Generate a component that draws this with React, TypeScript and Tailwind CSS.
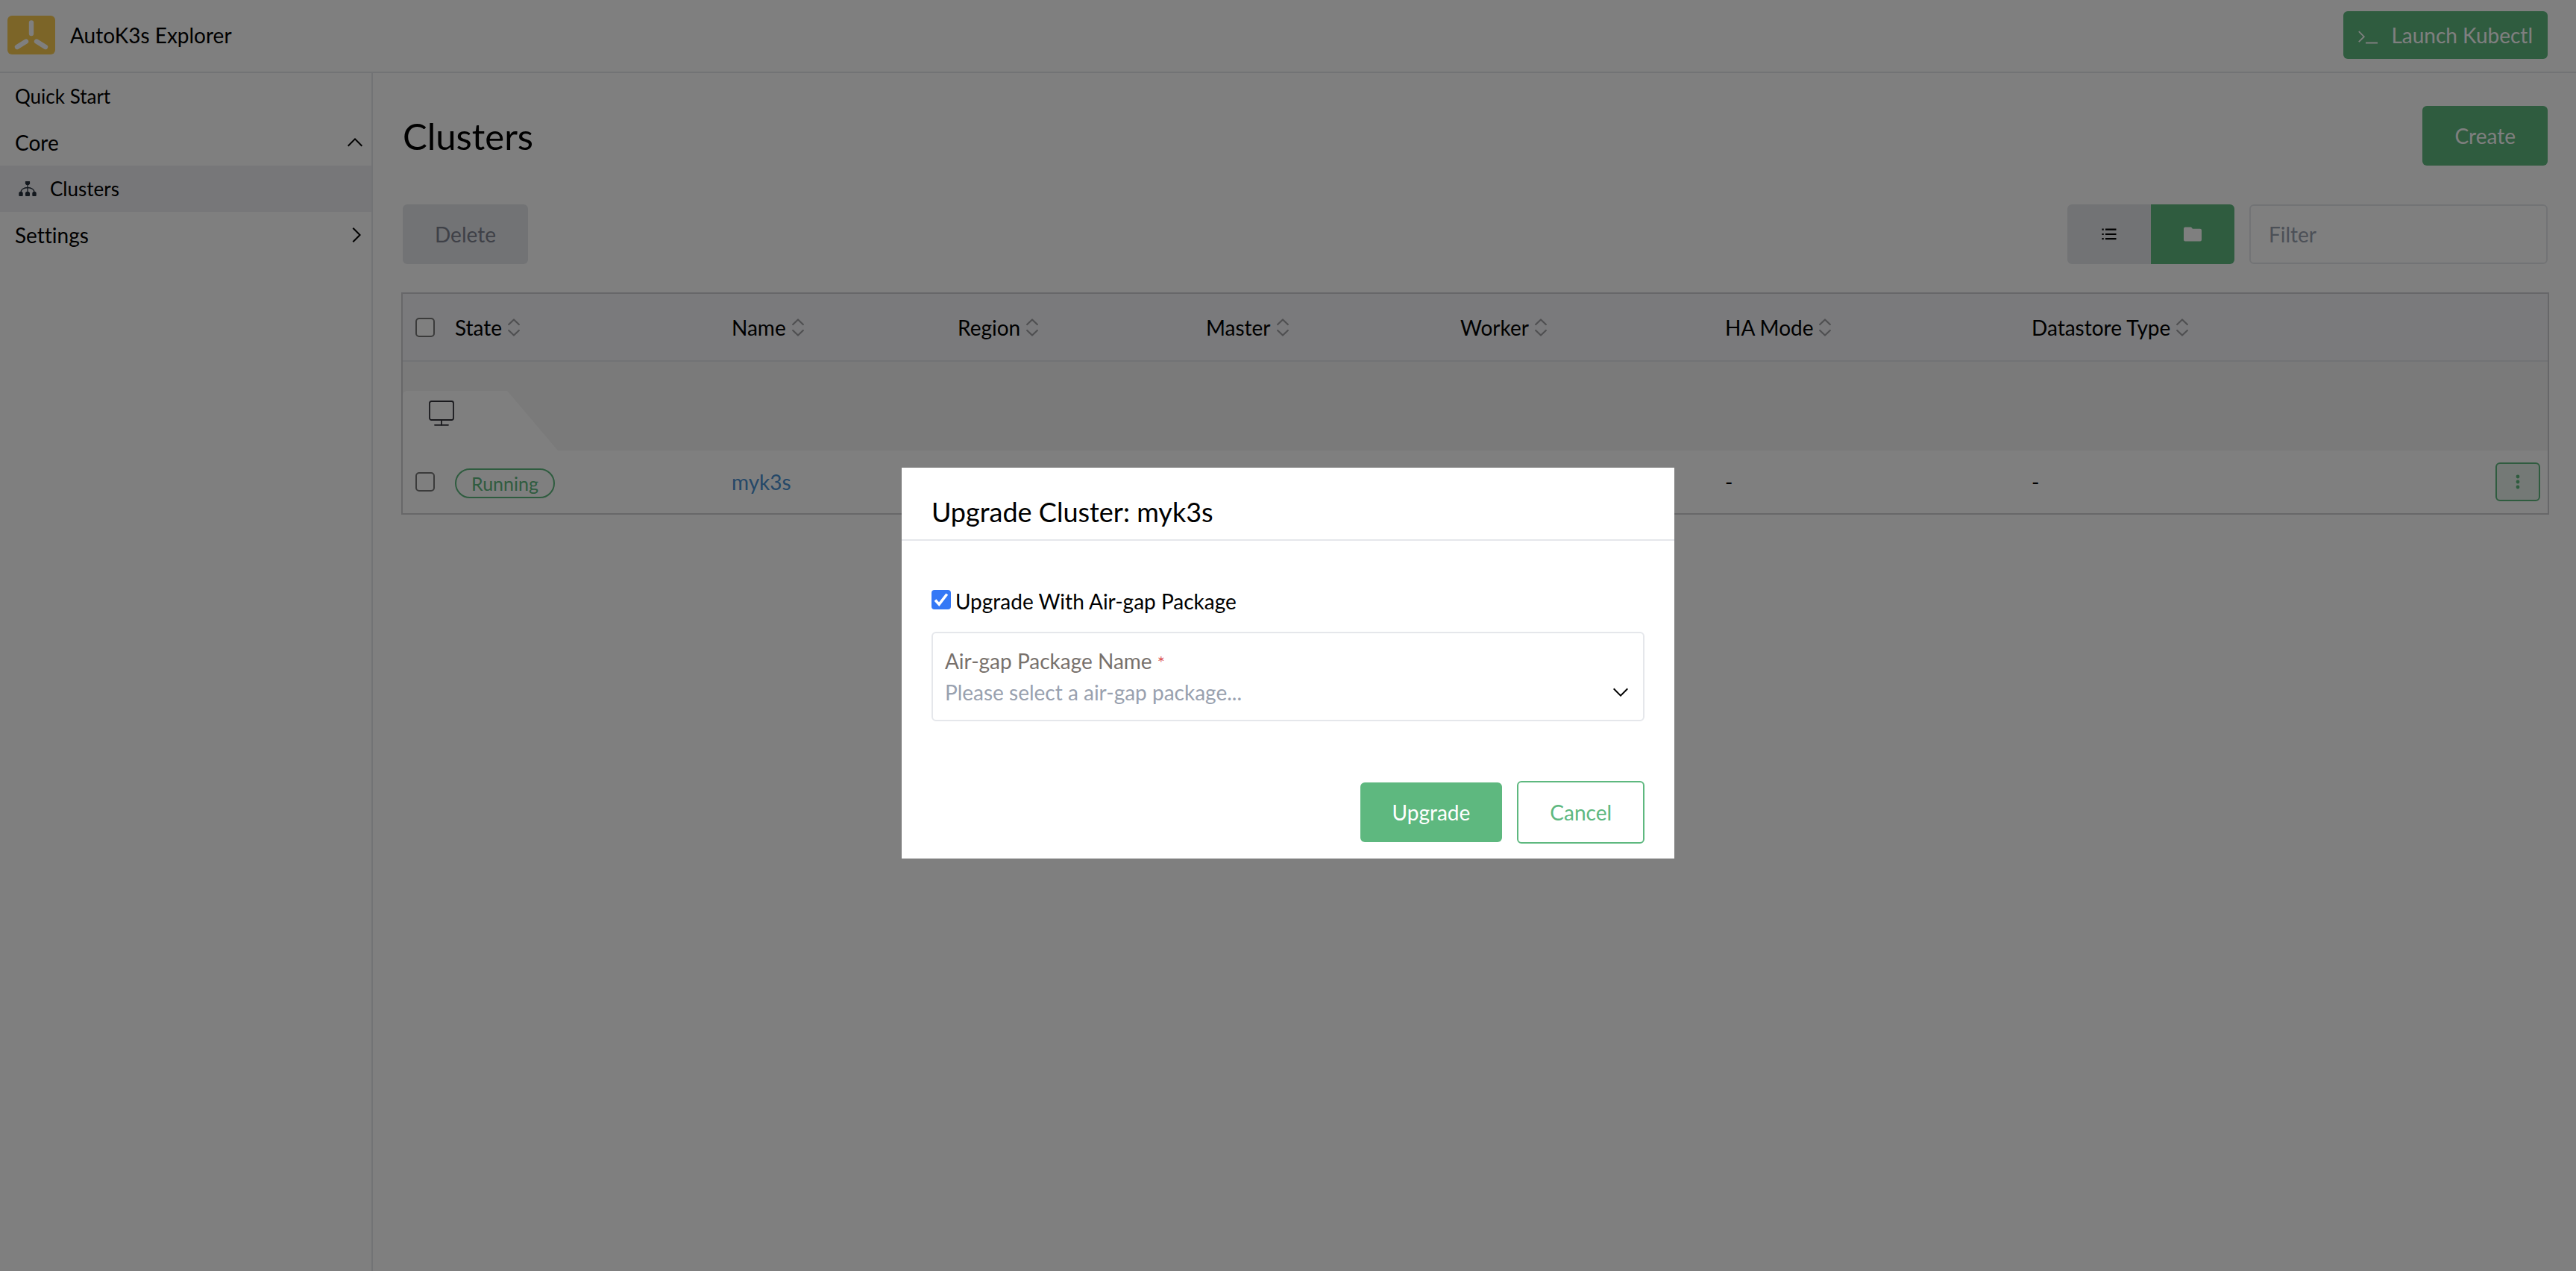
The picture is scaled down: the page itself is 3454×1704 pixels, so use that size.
import React, { useState } from "react";

type IconProps = { className?: string };

function LogoIcon() {
  return (
    <svg viewBox="0 0 64 52" className="h-[52px] w-16 shrink-0" aria-hidden="true">
      <rect width="64" height="52" rx="6" fill="#f9cb50" />
      <g stroke="#fff" strokeWidth="6.4" strokeLinecap="round">
        <path d="M32 9.5V24" />
        <path d="M25 34.5 13 42" />
        <path d="M39 34.5 51 42" />
      </g>
    </svg>
  );
}

function ClusterIcon() {
  return (
    <svg viewBox="0 0 24 20" className="h-5 w-6" aria-hidden="true" fill="#26303c">
      <path d="M9.5 0h5a.6.6 0 0 1 .6.6v2.8L13.6 5h-3.2L8.9 3.4V.6A.6.6 0 0 1 9.5 0Z" />
      <path d="M1.500 14h3l1.200 1.500V19a1 1 0 0 1-1 1H1.300a1 1 0 0 1-1-1v-3.500L1.500 14ZM10.400 14h3.200l1.400 1.500V19a1 1 0 0 1-1 1h-4a1 1 0 0 1-1-1v-3.500l1.400-1.500ZM19.500 14h3l1.200 1.500V19a1 1 0 0 1-1 1h-3.400a1 1 0 0 1-1-1v-3.500l1.200-1.500Z" />
      <path d="M12 4v11M3 15c0-4 4-6.500 9-6.500s9 2.500 9 6.500" fill="none" stroke="#26303c" strokeWidth="1.300" />
    </svg>
  );
}

function ChevronUp({ className = "" }: IconProps) {
  return (
    <svg viewBox="0 0 20 12" className={`h-3 w-5 ${className}`} fill="none" stroke="#000" strokeWidth="2" aria-hidden="true">
      <path d="M.7 10.700 10 1.400l9.300 9.300" />
    </svg>
  );
}

function ChevronRight() {
  return (
    <svg viewBox="0 0 12 20" className="h-5 w-3" fill="none" stroke="#000" strokeWidth="2" aria-hidden="true">
      <path d="M1.300.7 10.600 10l-9.300 9.300" />
    </svg>
  );
}

function PromptIcon() {
  return (
    <svg viewBox="0 0 26 18" className="mt-1.5 h-[18px] w-[26px]" fill="none" stroke="#fff" aria-hidden="true">
      <path d="m.8 1.200 7 7-7 7" strokeWidth="1.800" />
      <path d="M10 16.500h16" strokeWidth="2" />
    </svg>
  );
}

function SortIcon() {
  return (
    <svg
      viewBox="0 0 16 24"
      className="h-6 w-4"
      fill="none"
      stroke="#9f9fa3"
      strokeWidth="2.200"
      strokeLinecap="round"
      strokeLinejoin="round"
      aria-hidden="true"
    >
      <path d="m1.200 8 6.800-6.500L14.800 8M1.200 16l6.800 6.500 6.800-6.500" />
    </svg>
  );
}

function ListIcon() {
  return (
    <svg viewBox="0 0 20 16" className="h-4 w-5" fill="#000" aria-hidden="true">
      <path d="M.5.600h2.200v2.200H.5zM5 .600h14.500v2.200H5zM.5 6.900h2.200v2.200H.5zM5 6.900h14.500v2.200H5zM.5 13.100h2.200v2.200H.5zM5 13.100h14.500v2.200H5z" />
    </svg>
  );
}

function FolderIcon() {
  return (
    <svg viewBox="0 0 24 20" className="h-5 w-6" fill="#fff" aria-hidden="true">
      <path d="M2 .5h8L12 2.800h10a2 2 0 0 1 2 2V17.500a2 2 0 0 1-2 2H2a2 2 0 0 1-2-2v-15a2 2 0 0 1 2-2Z" />
    </svg>
  );
}

function MonitorIcon() {
  return (
    <svg viewBox="0 0 34 34" className="size-[34px]" fill="none" stroke="#33333a" strokeWidth="1.800" strokeLinecap="round" aria-hidden="true">
      <rect x="1" y="1" width="32" height="25" rx="2.500" />
      <path d="M17 26v7M8 32.800h18" />
    </svg>
  );
}

const columns = ["State", "Name", "Region", "Master", "Worker", "HA Mode", "Datastore Type"];
const boxClass =
  "block size-[26px] appearance-none rounded-[5px] border-2 border-[#767676] bg-white checked:bg-[#3478f6]";

export default function App() {
  const [airgap, setAirgap] = useState(true);
  return (
    <div className="flex min-h-screen flex-col bg-white font-[Lato,sans-serif] text-[28px] leading-[42px] text-black [font-variant-ligatures:none]">
      <header className="flex h-[98px] items-center justify-between border-b-2 border-gray-200 pb-0.5 pl-2.5 pr-[38px]">
        <div className="flex items-center gap-5">
          <LogoIcon />
          <span>AutoK3s Explorer</span>
        </div>
        <button className="flex h-16 items-center gap-[18px] rounded-md bg-[#5eb87f] px-5 text-white">
          <PromptIcon />
          <span>Launch Kubectl</span>
        </button>
      </header>

      <div className="flex flex-1">
        <nav className="w-[500px] shrink-0 border-r-2 border-gray-200">
          <a href="#quick-start" className="flex h-[62px] items-center px-5 text-[26px]">
            Quick Start
          </a>
          <button className="flex h-[62px] w-full items-center justify-between pl-5 pr-3">
            <span>Core</span>
            <ChevronUp />
          </button>
          <a href="#clusters" className="flex h-[62px] items-center gap-[18px] bg-[#efeff2] pl-[25px] text-[26px]">
            <ClusterIcon />
            <span>Clusters</span>
          </a>
          <button className="flex h-[62px] w-full items-center justify-between pl-5 pr-3.5">
            <span>Settings</span>
            <ChevronRight />
          </button>
        </nav>

        <main className="min-w-0 flex-1 pl-[38px] pr-9 pt-11">
          <div className="flex items-center justify-between px-0.5">
            <h1 className="text-[49px]">Clusters</h1>
            <button className="h-20 rounded-md bg-[#5eb87f] px-[43px] text-white">Create</button>
          </div>

          <div className="mt-[52px] flex items-center justify-between px-0.5">
            <button disabled className="h-20 rounded-md bg-gray-200 px-[43px] text-[#7d818f]">
              Delete
            </button>
            <div className="flex gap-5">
              <div className="flex">
                <button aria-label="List view" className="flex h-20 w-28 items-center justify-center rounded-l-md bg-gray-200">
                  <ListIcon />
                </button>
                <button aria-label="Group view" className="flex h-20 w-28 items-center justify-center rounded-r-md bg-[#5eb87f]">
                  <FolderIcon />
                </button>
              </div>
              <input
                type="text"
                aria-label="Filter"
                placeholder="Filter"
                className="h-20 w-[400px] rounded-md border-2 border-gray-200 px-6 placeholder:text-gray-400"
              />
            </div>
          </div>

          <div className="mt-[38px] border-2 border-[#cfcfd2]">
            <table className="w-full table-fixed border-collapse text-left">
              <colgroup>
                <col className="w-[70px]" />
                <col className="w-[371px]" />
                <col className="w-[303px]" />
                <col className="w-[333px]" />
                <col className="w-[341px]" />
                <col className="w-[355px]" />
                <col className="w-[411px]" />
                <col className="w-[692px]" />
              </colgroup>
              <thead>
                <tr className="h-[90px] border-b-2 border-gray-200 bg-[#f4f5f8]">
                  <th className="p-0 pl-[17px]">
                    <input type="checkbox" aria-label="Select all clusters" className={boxClass} />
                  </th>
                  {columns.map((name) => (
                    <th key={name} className="p-0 font-normal">
                      <button className="flex items-center gap-2">
                        <span>{name}</span>
                        <SortIcon />
                      </button>
                    </th>
                  ))}
                </tr>
              </thead>
              <tbody>
                <tr className="h-[120px] bg-[#f4f4f4]">
                  <td colSpan={8} className="p-0 align-bottom">
                    <div className="h-20 w-52 rounded-tl-md bg-white pl-[35px] pt-[13px] [clip-path:polygon(0_0,140px_0,100%_100%,0_100%)]">
                      <MonitorIcon />
                    </div>
                  </td>
                </tr>
                <tr className="h-[84px]">
                  <td className="p-0 pl-[17px]">
                    <input type="checkbox" aria-label="Select myk3s" className={boxClass} />
                  </td>
                  <td className="p-0">
                    <span className="inline-flex h-10 items-center rounded-full border-2 border-[#5eb87f] px-5 align-middle text-[25px] text-[#5eb87f]">
                      Running
                    </span>
                  </td>
                  <td className="p-0">
                    <a href="#myk3s" className="text-[#4a90d0]">
                      myk3s
                    </a>
                  </td>
                  <td className="p-0">-</td>
                  <td className="p-0">1</td>
                  <td className="p-0">0</td>
                  <td className="p-0">-</td>
                  <td className="p-0">
                    <div className="flex items-center justify-between pr-2.5">
                      <span>-</span>
                      <button
                        aria-label="Actions for myk3s"
                        className="flex h-[52px] w-[60px] items-center justify-center rounded-md border-2 border-[#5eb87f] bg-[#e8f3ec]"
                      >
                        <svg viewBox="0 0 6 20" className="h-5 w-1.5" fill="#5eb87f" aria-hidden="true">
                          <circle cx="3" cy="3" r="2.400" />
                          <circle cx="3" cy="10" r="2.400" />
                          <circle cx="3" cy="17" r="2.400" />
                        </svg>
                      </button>
                    </div>
                  </td>
                </tr>
              </tbody>
            </table>
          </div>
        </main>
      </div>

      <div className="fixed inset-0 flex items-start justify-center bg-black/50 pt-[627px]">
        <section role="dialog" aria-modal="true" aria-labelledby="dialog-title" className="w-[30%] bg-white">
          <h2 id="dialog-title" className="border-b-2 border-gray-200 px-10 pb-3 pt-[34px] text-4xl leading-[50px]">
            Upgrade Cluster: myk3s
          </h2>
          <div className="px-10 pb-5 pt-[60px]">
            <label className="flex items-start gap-1.5">
              <span className="relative mt-1.5 flex">
                <input
                  type="checkbox"
                  checked={airgap}
                  onChange={(e) => setAirgap(e.target.checked)}
                  className="size-[26px] appearance-none rounded-[4px] border-[#767676] bg-white not-checked:border-2 checked:bg-[#3478f6]"
                />
                {airgap && (
                  <svg viewBox="0 0 26 26" className="pointer-events-none absolute inset-0 size-[26px]" fill="none" stroke="#fff" strokeWidth="3.600" aria-hidden="true">
                    <path d="m5 13.500 5.200 5.700L20.800 5.500" />
                  </svg>
                )}
              </span>
              <span>Upgrade With Air-gap Package</span>
            </label>
            <div className="mt-5 flex h-[120px] flex-col justify-center rounded-md border-2 border-gray-200 px-4">
              <label htmlFor="package" className="text-[#78716c]">
                Air-gap Package Name <span className="text-2xl text-[#dc5555]">*</span>
              </label>
              <div className="relative flex items-center">
                <select id="package" defaultValue="" className="w-full appearance-none text-gray-400">
                  <option value="">Please select a air-gap package...</option>
                </select>
                <ChevronUp className="pointer-events-none absolute right-1 rotate-180" />
              </div>
            </div>
            <div className="mt-20 flex items-center justify-end gap-5">
              <button className="h-20 rounded-md bg-[#5eb87f] px-[43px] text-white">Upgrade</button>
              <button className="h-[84px] rounded-md border-2 border-[#5eb87f] px-[42px] text-[#5eb87f]">Cancel</button>
            </div>
          </div>
        </section>
      </div>
    </div>
  );
}
